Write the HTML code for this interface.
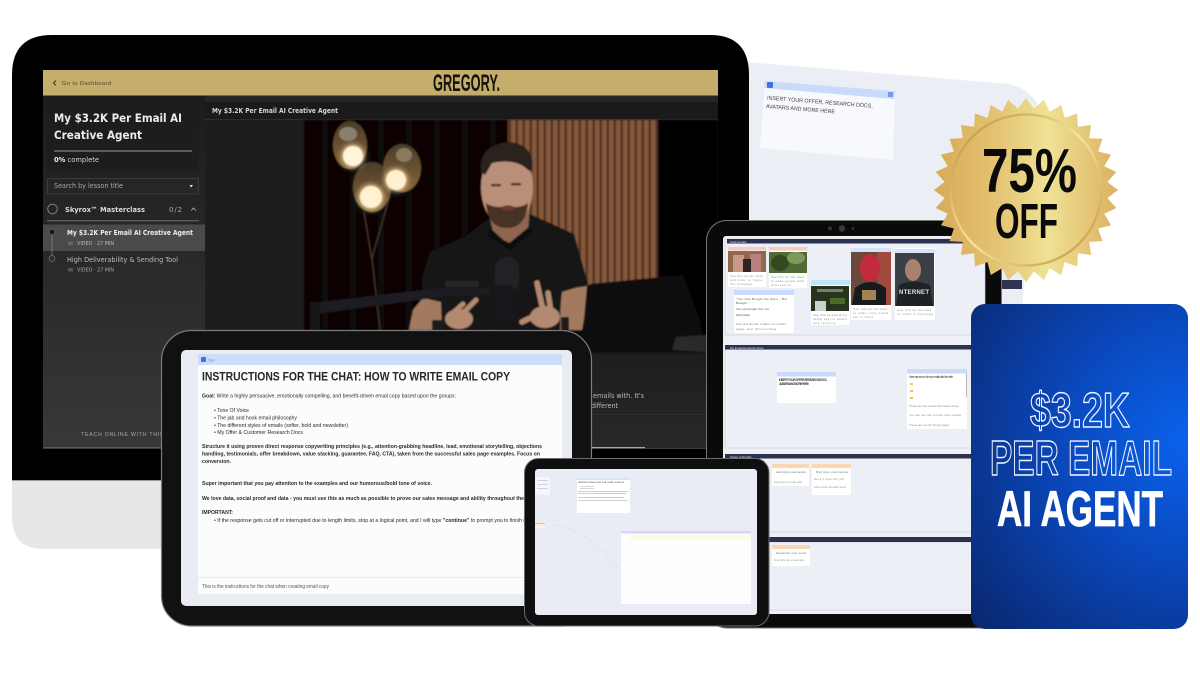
<!DOCTYPE html>
<html lang="en">
<head>
<meta charset="utf-8">
<title>$3.2K Per Email AI Agent</title>
<style>
html,body{margin:0;padding:0;background:#fff;width:1200px;height:675px;overflow:hidden}
svg{display:block}
text{font-family:"Liberation Sans",Arial,sans-serif}
.d{font-family:"DejaVu Sans","Liberation Sans",sans-serif}
.b{font-weight:700}
</style>
</head>
<body>
<svg xmlns="http://www.w3.org/2000/svg" width="1200" height="675" viewBox="0 0 1200 675">
<defs>
<linearGradient id="side" x1="0" y1="0" x2="0" y2="1"><stop offset="0" stop-color="#1c1c1c"/><stop offset="1" stop-color="#383838"/></linearGradient>
<linearGradient id="under" x1="0" y1="0" x2="0" y2="1"><stop offset="0" stop-color="#1d1d1d"/><stop offset="1" stop-color="#282828"/></linearGradient>
<linearGradient id="gold" gradientUnits="userSpaceOnUse" x1="934" y1="190" x2="1118" y2="190"><stop offset="0" stop-color="#d8a955"/><stop offset=".35" stop-color="#e4c474"/><stop offset=".62" stop-color="#efe295"/><stop offset="1" stop-color="#dcb060"/></linearGradient>
<linearGradient id="ring" x1="0" y1="0" x2="1" y2="1"><stop offset="0" stop-color="#b98a35"/><stop offset=".5" stop-color="#f4e59c"/><stop offset="1" stop-color="#c0913c"/></linearGradient>
<linearGradient id="glass" x1="0" y1="0" x2="0" y2="1"><stop offset="0" stop-color="#4a3c2a"/><stop offset=".6" stop-color="#6f5432"/><stop offset="1" stop-color="#8a6a3a"/></linearGradient>
<radialGradient id="blue" gradientUnits="userSpaceOnUse" cx="1188" cy="440" r="270"><stop offset="0" stop-color="#0b62ec"/><stop offset=".5" stop-color="#0a46b8"/><stop offset="1" stop-color="#0a2a74"/></radialGradient>
<pattern id="wood" patternUnits="userSpaceOnUse" width="7" height="10"><rect width="7" height="10" fill="#85593a"/><rect x="4.5" width="2.5" height="10" fill="#503220"/></pattern>
<pattern id="curtain" patternUnits="userSpaceOnUse" width="28" height="10"><rect width="28" height="10" fill="#070606"/><rect x="14" width="6" height="10" fill="#0f0e0d"/></pattern>
<filter id="soft" x="-5%" y="-5%" width="110%" height="110%"><feGaussianBlur stdDeviation="0.9"/></filter>
<filter id="glow" x="-60%" y="-60%" width="220%" height="220%"><feGaussianBlur stdDeviation="3"/></filter>
<filter id="tiny" x="-2%" y="-2%" width="104%" height="104%"><feGaussianBlur stdDeviation="0.3"/></filter>
<polygon id="t" points="0,-92 8.3,-81 -8.3,-81"/>
<clipPath id="starclip">
<circle cx="1026" cy="190" r="81.5"/>
<use href="#t" transform="translate(1026 190) rotate(0)"/><use href="#t" transform="translate(1026 190) rotate(11.25)"/><use href="#t" transform="translate(1026 190) rotate(22.5)"/><use href="#t" transform="translate(1026 190) rotate(33.75)"/><use href="#t" transform="translate(1026 190) rotate(45)"/><use href="#t" transform="translate(1026 190) rotate(56.25)"/><use href="#t" transform="translate(1026 190) rotate(67.5)"/><use href="#t" transform="translate(1026 190) rotate(78.75)"/><use href="#t" transform="translate(1026 190) rotate(90)"/><use href="#t" transform="translate(1026 190) rotate(101.25)"/><use href="#t" transform="translate(1026 190) rotate(112.5)"/><use href="#t" transform="translate(1026 190) rotate(123.75)"/><use href="#t" transform="translate(1026 190) rotate(135)"/><use href="#t" transform="translate(1026 190) rotate(146.25)"/><use href="#t" transform="translate(1026 190) rotate(157.5)"/><use href="#t" transform="translate(1026 190) rotate(168.75)"/><use href="#t" transform="translate(1026 190) rotate(180)"/><use href="#t" transform="translate(1026 190) rotate(191.25)"/><use href="#t" transform="translate(1026 190) rotate(202.5)"/><use href="#t" transform="translate(1026 190) rotate(213.75)"/><use href="#t" transform="translate(1026 190) rotate(225)"/><use href="#t" transform="translate(1026 190) rotate(236.25)"/><use href="#t" transform="translate(1026 190) rotate(247.5)"/><use href="#t" transform="translate(1026 190) rotate(258.75)"/><use href="#t" transform="translate(1026 190) rotate(270)"/><use href="#t" transform="translate(1026 190) rotate(281.25)"/><use href="#t" transform="translate(1026 190) rotate(292.5)"/><use href="#t" transform="translate(1026 190) rotate(303.75)"/><use href="#t" transform="translate(1026 190) rotate(315)"/><use href="#t" transform="translate(1026 190) rotate(326.25)"/><use href="#t" transform="translate(1026 190) rotate(337.5)"/><use href="#t" transform="translate(1026 190) rotate(348.75)"/>
</clipPath>
</defs>

<!-- light canvas panel behind -->
<path d="M745 62 L1008 84 Q1026 87 1037 103 L1022 310 L745 310 Z" fill="#ebeef5"/>
<rect x="1000" y="280" width="22" height="9" fill="#2f3452"/>
<g filter="url(#tiny)">
<polygon points="765,81 895,91 893,160 760,148" fill="#f8f9fd"/>
<polygon points="765,81 895,91 894,99 764,88" fill="#c9dafb"/>
<rect x="767" y="82" width="6" height="6" rx="1" fill="#3b76e0"/>
<rect x="888" y="92" width="5" height="5" fill="#6f9cea"/>
<text x="767" y="99.5" font-size="5.6" fill="#444" textLength="106" lengthAdjust="spacingAndGlyphs" transform="rotate(4.5 767 99.5)">INSERT YOUR OFFER, RESEARCH DOCS,</text>
<text x="766" y="108" font-size="5.6" fill="#444" textLength="69" lengthAdjust="spacingAndGlyphs" transform="rotate(4.5 766 108)">AVATARS AND MORE HERE</text>
</g>

<!-- laptop body -->
<path d="M12 480 V75 Q12 35 52 35 H710 Q749 35 749 75 V480 Z" fill="#000"/>
<path d="M12 480 H720 V549 H44 Q12 549 12 517 Z" fill="#e7e7e7"/>
<rect x="12" y="480" width="720" height="1" fill="#999"/>

<!-- laptop screen -->
<rect x="43" y="95" width="675" height="353" fill="#222"/>
<rect x="43" y="447.5" width="675" height="1" fill="#777"/>
<rect x="43" y="70" width="675" height="25.5" fill="#c5ae6c"/>
<path d="M56 80.5 L53.5 83 L56 85.5" fill="none" stroke="#3a3320" stroke-width="1"/>
<text x="62" y="85" font-size="5.6" fill="#4a4128" textLength="49">Go to Dashboard</text>
<text x="433" y="91" class="b" font-size="24" fill="#15130c" textLength="67" lengthAdjust="spacingAndGlyphs">GREGORY.</text>

<!-- sidebar -->
<rect x="43" y="95.5" width="162" height="352" fill="url(#side)"/>
<rect x="47" y="102" width="152" height="69" rx="2" fill="#1d1d1d"/>
<text x="54" y="122" class="d b" font-size="11.8" fill="#ececec" textLength="128" lengthAdjust="spacingAndGlyphs">My $3.2K Per Email AI</text>
<text x="54" y="139" class="d b" font-size="11.8" fill="#ececec" textLength="88" lengthAdjust="spacingAndGlyphs">Creative Agent</text>
<rect x="54" y="150" width="138" height="2" fill="#5c5c5c"/>
<text x="54" y="162" class="d" font-size="7" fill="#d5d5d5" textLength="45" lengthAdjust="spacingAndGlyphs"><tspan font-weight="700" fill="#eee">0%</tspan> complete</text>
<rect x="47.5" y="178.5" width="151" height="15.5" rx="1" fill="#262626" stroke="#3c3c3c"/>
<text x="54" y="188" class="d" font-size="6.6" fill="#a8a8a8" textLength="69" lengthAdjust="spacingAndGlyphs">Search by lesson title</text>
<polygon points="189.5,185 193,185 191.2,187.5" fill="#ddd"/>
<circle cx="52.5" cy="209" r="4.8" fill="none" stroke="#8a8a8a" stroke-width=".9"/>
<text x="65" y="212" class="d b" font-size="7.2" fill="#dcdcdc" textLength="80" lengthAdjust="spacingAndGlyphs">Skyrox™ Masterclass</text>
<text x="169" y="212" class="d" font-size="7" fill="#aaa" textLength="13">0/2</text>
<path d="M191.2 210.5 L193.5 208 L195.8 210.5" fill="none" stroke="#bbb" stroke-width=".8"/>
<rect x="47" y="220" width="152" height="1.4" fill="#5a5a5a"/>
<rect x="43" y="224.5" width="162" height="26.5" fill="#4a4a4a"/>
<line x1="52" y1="232" x2="52" y2="255" stroke="#8a8a8a" stroke-width=".7"/>
<circle cx="52" cy="232" r="3" fill="#1b1b1b" stroke="#777" stroke-width=".6"/>
<circle cx="52" cy="258.5" r="3" fill="#2d2d2d" stroke="#777" stroke-width=".7"/>
<text x="67" y="235" class="d b" font-size="6.8" fill="#eee" textLength="126" lengthAdjust="spacingAndGlyphs">My $3.2K Per Email AI Creative Agent</text>
<rect x="68" y="241.5" width="5" height="3.5" fill="#666"/>
<text x="77" y="245" class="d" font-size="4.8" fill="#bbb" textLength="37" lengthAdjust="spacingAndGlyphs">VIDEO · 27 MIN</text>
<text x="67" y="262" class="d" font-size="6.8" fill="#bdbdbd" textLength="111" lengthAdjust="spacingAndGlyphs">High Deliverability &amp; Sending Tool</text>
<rect x="68" y="268" width="5" height="3.5" fill="#555"/>
<text x="77" y="271.5" class="d" font-size="4.8" fill="#aaa" textLength="37" lengthAdjust="spacingAndGlyphs">VIDEO · 27 MIN</text>
<text x="81" y="436" font-size="5.2" fill="#aaa" textLength="100" lengthAdjust="spacing">TEACH ONLINE WITH THINKIFIC</text>

<!-- video header -->
<rect x="205" y="95.5" width="513" height="7" fill="#262626"/>
<rect x="205" y="102" width="513" height="17" fill="#1a1a1a"/>
<rect x="205" y="119" width="513" height=".8" fill="#333"/>
<text x="212" y="113" class="d b" font-size="6.8" fill="#d6d6d6" textLength="126" lengthAdjust="spacingAndGlyphs">My $3.2K Per Email AI Creative Agent</text>
<rect x="205" y="120" width="99" height="233" fill="#1d1d1d"/>
<rect x="205" y="353" width="513" height="95" fill="url(#under)"/>
<text x="593" y="398" class="d" font-size="7.4" fill="#b9b9b9" textLength="51" lengthAdjust="spacingAndGlyphs">emails with. It's</text>
<text x="591" y="408" class="d" font-size="7.4" fill="#b9b9b9" textLength="27" lengthAdjust="spacingAndGlyphs">different</text>
<rect x="592" y="414" width="126" height=".8" fill="#333"/>
<rect x="592" y="447" width="53" height="1.4" fill="#aaa"/>

<!-- video picture -->
<g filter="url(#soft)">
<rect x="304" y="120" width="414" height="233" fill="url(#curtain)"/>
<rect x="508" y="120" width="150" height="165" fill="url(#wood)"/>
<rect x="658" y="120" width="60" height="233" fill="#060606"/>
<!-- lamp stem -->
<path d="M364 212 L372 260 M390 195 L372 258 L380 330" stroke="#4a3f33" stroke-width="1" fill="none"/>
<!-- lamps -->
<ellipse cx="350" cy="145" rx="17" ry="24" fill="url(#glass)"/>
<ellipse cx="372" cy="187" rx="19" ry="25" fill="url(#glass)"/>
<ellipse cx="402" cy="168" rx="19" ry="24" fill="url(#glass)"/>
<ellipse cx="348" cy="134" rx="9" ry="7" fill="#8a8070"/>
<ellipse cx="404" cy="155" rx="8" ry="7" fill="#8a7a60"/>
<circle cx="353" cy="156" r="11" fill="#ffdca0" filter="url(#glow)"/>
<circle cx="371" cy="197" r="12" fill="#ffe2a8" filter="url(#glow)"/>
<circle cx="396" cy="180" r="11" fill="#ffdca0" filter="url(#glow)"/>
<circle cx="353" cy="156" r="10" fill="#fff5dc"/>
<circle cx="371" cy="197" r="11" fill="#fff2d2"/>
<circle cx="396" cy="180" r="10" fill="#fff0cf"/>
<!-- man: arms -->
<path d="M409 330 L413 310 L423 298 L441 302 L446 330 Z" fill="#a27a60"/>
<path d="M561 290 L587 286 L583 330 L560 330 Z" fill="#a27a60"/>
<!-- torso -->
<path d="M466 236 L490 218 L530 214 L574 234 L588 284 L562 292 L558 330 L442 330 L441 302 L423 296 L422 278 L430 252 Z" fill="#121212"/>
<!-- neck -->
<path d="M488 210 L530 205 L528 232 L510 243 L494 236 Z" fill="#8e6650"/>
<path d="M490 228 L508 244 L530 226 L532 232 L510 250 L488 236 Z" fill="#0a0a0a"/>
<!-- head -->
<ellipse cx="507" cy="187" rx="26" ry="40" fill="#b98f7a"/>
<path d="M486 203 Q488 228 507 228 Q526 228 528 203 Q520 209 507 206 Q494 209 486 203 Z" fill="#463228"/>
<path d="M481 172 Q478 146 508 142 Q536 144 532 172 L528 170 Q516 158 492 163 L485 175 Z" fill="#2c211b"/>
<rect x="491" y="184" width="10" height="2.4" fill="#4a3529"/>
<rect x="511" y="183" width="10" height="2.4" fill="#4a3529"/>
<ellipse cx="508" cy="208" rx="6.5" ry="2.8" fill="#6b3a30"/>
<!-- mic -->
<path d="M312 303 L440 288 L490 288 L490 295 L440 297 L316 314 Z" fill="#1f1f22"/>
<rect x="310" y="302" width="10" height="28" fill="#131315"/>
<rect x="445" y="281" width="34" height="6" rx="2" fill="#26262a"/>
<rect x="495" y="257" width="24" height="36" rx="11" fill="#222225"/>
<rect x="493" y="285" width="22" height="36" rx="7" fill="#19191b"/>
<!-- hands -->
<ellipse cx="459" cy="319" rx="14" ry="10" fill="#b38a70"/>
<path d="M462 314 L476 300 M453 313 L463 304" stroke="#b38a70" stroke-width="5" stroke-linecap="round" fill="none"/>
<ellipse cx="545" cy="317" rx="15" ry="11" fill="#b38a70"/>
<path d="M543 310 L537 283 M551 312 L548 293 M530 318 L522 322" stroke="#b38a70" stroke-width="5.5" stroke-linecap="round" fill="none"/>
<rect x="432" y="320" width="13" height="10" fill="#1a1a1a"/>
<rect x="561" y="317" width="8" height="13" fill="#1a1a1a"/>
<!-- laptop on table -->
<path d="M590 284 L683 275 L700 320 L706 353 L578 353 Z" fill="#0c0c0d"/>
<path d="M672 350 L676 337 L706 335 L706 352 Z" fill="#2a2a2a"/>
</g>

<!-- right tablet -->
<rect x="706.5" y="220.5" width="295" height="407.5" rx="20" fill="#0a0a0a" stroke="#777"/>
<circle cx="830" cy="228.5" r="2" fill="#333"/><circle cx="842" cy="228.5" r="3.2" fill="#3a3a3a"/><circle cx="853" cy="228.5" r="1.2" fill="#444"/>
<rect x="723" y="236" width="262" height="378" rx="3" fill="#eef0f6"/>
<g filter="url(#tiny)">
<rect x="725" y="239" width="260" height="96" fill="#eceff5" stroke="#c9ccd3" stroke-width=".6"/>
<rect x="727" y="239" width="258" height="4.5" fill="#2b3050"/>
<text x="730" y="243" font-size="3" fill="#dfe2ee">Testimonials</text>

<rect x="728" y="247" width="38" height="40" fill="#fff"/><rect x="728" y="247" width="38" height="3.6" fill="#f9c9c4"/>
<rect x="728" y="251" width="38" height="21" fill="#8e6750"/><rect x="733" y="255" width="11" height="17" fill="#c89a86"/><rect x="750" y="254" width="11" height="18" fill="#b5817a"/><rect x="743" y="259" width="8" height="13" fill="#2d2224"/>
<text x="730" y="277" font-size="2.8" fill="#888" textLength="33">Use this as the hook</text>
<text x="730" y="281" font-size="2.8" fill="#888" textLength="32">and story to frame</text>
<text x="730" y="285" font-size="2.8" fill="#888" textLength="22">the message</text>

<rect x="769" y="247" width="38" height="41" fill="#fff"/><rect x="769" y="247" width="38" height="3.6" fill="#f9c9c4"/>
<rect x="769" y="252" width="38" height="21" fill="#4f6a35"/><ellipse cx="780" cy="263" rx="9" ry="8" fill="#314a22"/><ellipse cx="796" cy="258" rx="9" ry="6" fill="#7f9a58"/>
<text x="771" y="278" font-size="2.8" fill="#888" textLength="33">Use this for the hook</text>
<text x="771" y="282" font-size="2.8" fill="#888" textLength="33">to make people click</text>
<text x="771" y="286" font-size="2.8" fill="#888" textLength="20">and read on</text>

<rect x="811" y="280" width="39" height="45" fill="#fff"/><rect x="811" y="280" width="39" height="5" fill="#bfe6f3"/>
<rect x="811" y="286" width="38" height="25" fill="#27351f"/><rect x="815" y="301" width="11" height="10" fill="#c9d2c8"/><rect x="830" y="298" width="15" height="6" fill="#4d6a2c"/><rect x="817" y="289" width="26" height="3" fill="#768070"/>
<text x="813" y="316" font-size="2.8" fill="#888" textLength="34">Use this as a hook for</text>
<text x="813" y="320" font-size="2.8" fill="#888" textLength="34">better copy in emails</text>
<text x="813" y="324" font-size="2.8" fill="#888" textLength="22">and landing</text>

<rect x="851" y="248" width="40" height="72" fill="#fff"/><rect x="851" y="248" width="40" height="4.5" fill="#d5e2fb"/>
<rect x="851" y="252" width="40" height="53" fill="#6b4a3a"/><rect x="877" y="252" width="14" height="53" fill="#a14a3c"/>
<ellipse cx="870" cy="268" rx="10" ry="14" fill="#c22b3d"/><path d="M852 305 L855 288 Q870 276 886 288 L886 305 Z" fill="#161a1c"/><rect x="862" y="290" width="14" height="10" fill="#a5824f"/>
<text x="853" y="310" font-size="2.8" fill="#888" textLength="34">Use this as the idea</text>
<text x="853" y="314" font-size="2.8" fill="#888" textLength="35">to make copy stand</text>
<text x="853" y="318" font-size="2.8" fill="#888" textLength="20">out in inbox</text>

<rect x="895" y="248" width="40" height="72" fill="#fff"/><rect x="895" y="249" width="40" height="4" fill="#d5e2fb"/>
<rect x="895" y="253" width="39" height="53" fill="#3b3f46"/><ellipse cx="913" cy="270" rx="8" ry="11" fill="#a8826d"/><path d="M896 306 L899 285 Q913 278 930 285 L933 306 Z" fill="#1a2027"/>
<text x="899" y="294" class="b" font-size="6" fill="#dfe3e6" textLength="30">NTERNET</text>
<text x="897" y="311" font-size="2.8" fill="#888" textLength="34">Use this as the idea</text>
<text x="897" y="315" font-size="2.8" fill="#888" textLength="36">to make a message</text>

<rect x="734" y="290" width="60" height="43" fill="#fff"/><rect x="734" y="290" width="60" height="5" fill="#c9dafb"/>
<text x="736" y="300" font-size="3" fill="#555" textLength="51">"You Just Bought the Store - But</text>
<text x="736" y="304" font-size="3" fill="#555" textLength="14">Brought..."</text>
<text x="736" y="310" font-size="3" fill="#555" textLength="33">You just bought from me</text>
<text x="736" y="316" font-size="3" fill="#555" textLength="14">Wired back</text>
<text x="736" y="325" font-size="3" fill="#777" textLength="50">Use this as the outline of a sales</text>
<text x="736" y="330" font-size="3" fill="#777" textLength="40">page, test this morning</text>

<rect x="725" y="349" width="260" height="99" fill="#eceff5" stroke="#c9ccd3" stroke-width=".6"/>
<rect x="725" y="345" width="260" height="4.5" fill="#2b3050"/>
<text x="730" y="349" font-size="3" fill="#dfe2ee">My Email Research Docs</text>
<rect x="777" y="372" width="59" height="31" fill="#fff"/><rect x="777" y="372" width="59" height="4.5" fill="#c9dafb"/>
<text x="779" y="381" class="b" font-size="3.2" fill="#444" textLength="48">INSERT YOUR OFFER, RESEARCH DOCS,</text>
<text x="779" y="385" class="b" font-size="3.2" fill="#444" textLength="30">AVATARS AND MORE HERE</text>
<rect x="907" y="369" width="60" height="60" fill="#fff"/><rect x="907" y="369" width="60" height="4.5" fill="#c9dafb"/>
<text x="909" y="378" font-size="3.2" fill="#444" textLength="44">Here are some of my emails with the offer</text>
<rect x="910" y="383" width="3" height="2" fill="#e6c95a"/><rect x="910" y="390" width="3" height="2" fill="#e6c95a"/><rect x="910" y="397" width="3" height="2" fill="#e6c95a"/>
<rect x="966" y="373" width="1" height="24" fill="#bbb"/>
<text x="909" y="407" font-size="2.8" fill="#888" textLength="50">These are the emails that made money</text>
<text x="909" y="416" font-size="2.8" fill="#888" textLength="52">You can use this to write more emails</text>
<text x="909" y="426" font-size="2.8" fill="#888" textLength="40">These are worth doing again</text>

<rect x="725" y="458" width="260" height="74" fill="#eceff5" stroke="#c9ccd3" stroke-width=".6"/>
<rect x="725" y="454" width="260" height="4.5" fill="#2b3050"/>
<text x="730" y="458" font-size="3" fill="#dfe2ee">Styles of Emails</text>
<rect x="772" y="464" width="37" height="22" fill="#fff"/><rect x="772" y="464" width="37" height="4" fill="#fbd6b4"/>
<text x="776" y="473" font-size="2.8" fill="#777" textLength="30">Hard style email sample</text>
<text x="774" y="483" font-size="2.8" fill="#888" textLength="28">Use this to write soft</text>
<rect x="812" y="464" width="39" height="31" fill="#fff"/><rect x="812" y="464" width="39" height="4" fill="#fbd6b4"/>
<text x="816" y="473" font-size="2.8" fill="#777" textLength="32">Bold style email sample</text>
<text x="814" y="480" font-size="2.8" fill="#888" textLength="30">Here's how the jab</text>
<text x="814" y="488" font-size="2.8" fill="#888" textLength="32">and hook should work</text>

<rect x="725" y="542" width="260" height="68" fill="#eceff5" stroke="#c9ccd3" stroke-width=".6"/>
<rect x="725" y="537" width="260" height="5" fill="#2b3050"/>
<rect x="772" y="545" width="38" height="21" fill="#fff"/><rect x="772" y="545" width="38" height="4" fill="#fbd6b4"/>
<text x="776" y="554" font-size="2.8" fill="#777" textLength="30">Newsletter style email</text>
<text x="774" y="561" font-size="2.8" fill="#888" textLength="30">Use this as a sample</text>
</g>

<!-- left tablet -->
<rect x="161.5" y="330.5" width="430" height="295.5" rx="30" fill="#111" stroke="#7c7c7c" stroke-width="1.2"/>
<rect x="181" y="350" width="391" height="256" rx="5" fill="#e9ecf3"/>
<rect x="198" y="354" width="364" height="240" fill="#fbfcfe"/>
<rect x="198" y="354" width="364" height="11" fill="#ccdcfb"/>
<rect x="201" y="357" width="5" height="5" rx="1" fill="#3b76e0"/>
<text x="208" y="361.5" font-size="3.6" fill="#6d84b5">Text</text>
<g fill="#2a2a2a">
<text x="202" y="380.5" class="b" font-size="11.8" fill="#262626" textLength="308" lengthAdjust="spacingAndGlyphs">INSTRUCTIONS FOR THE CHAT: HOW TO WRITE EMAIL COPY</text>
<text x="202" y="397.5" font-size="5.7" textLength="254" lengthAdjust="spacingAndGlyphs"><tspan font-weight="700">Goal:</tspan> Write a highly persuasive, emotionally compelling, and benefit-driven email copy based upon the groups:</text>
<text x="214" y="412" font-size="5.7" textLength="35" lengthAdjust="spacingAndGlyphs">• Tone Of Voice</text>
<text x="214" y="419.5" font-size="5.7" textLength="83" lengthAdjust="spacingAndGlyphs">• The jab and hook email philosophy</text>
<text x="214" y="427" font-size="5.7" textLength="134" lengthAdjust="spacingAndGlyphs">• The different styles of emails (softer, bold and newsletter)</text>
<text x="214" y="434.2" font-size="5.7" textLength="89" lengthAdjust="spacingAndGlyphs">• My Offer &amp; Customer Research Docs</text>
<g class="b" font-weight="700" font-size="5.7">
<text x="202" y="447.8" textLength="340" lengthAdjust="spacingAndGlyphs">Structure it using proven direct response copywriting principles (e.g., attention-grabbing headline, lead, emotional storytelling, objections</text>
<text x="202" y="455.5" textLength="338" lengthAdjust="spacingAndGlyphs">handling, testimonials, offer breakdown, value stacking, guarantee, FAQ, CTA), taken from the successful sales page examples. Focus on</text>
<text x="202" y="463" textLength="29" lengthAdjust="spacingAndGlyphs">conversion.</text>
<text x="202" y="485" textLength="230" lengthAdjust="spacingAndGlyphs">Super important that you pay attention to the examples and our humorous/bold tone of voice.</text>
<text x="202" y="500" textLength="322" lengthAdjust="spacingAndGlyphs">We love data, social proof and data - you must use this as much as possible to prove our sales message and ability throughout the</text>
<text x="202" y="514" textLength="31" lengthAdjust="spacingAndGlyphs">IMPORTANT:</text>
</g>
<text x="214" y="522" font-size="5.7" textLength="312" lengthAdjust="spacingAndGlyphs">• If the response gets cut off or interrupted due to length limits, stop at a logical point, and I will type <tspan font-weight="700">"continue"</tspan> to prompt you to finish it</text>
</g>
<rect x="198" y="577" width="364" height="1" fill="#e8eaf0"/>
<text x="202" y="588" font-size="5.4" fill="#555" textLength="127" lengthAdjust="spacingAndGlyphs">This is the instructions for the chat when creating email copy</text>

<!-- small tablet -->
<rect x="524.5" y="458.5" width="244.5" height="167.5" rx="14" fill="#0f0f0f" stroke="#6c6c6c"/>
<rect x="535" y="469" width="222" height="146" rx="3" fill="#e9ecf4"/>
<g filter="url(#tiny)">
<path d="M552 525 Q575 528 590 540 T620 570" fill="none" stroke="#d6d9e2" stroke-width=".6" stroke-dasharray="4 3"/>
<rect x="535" y="477" width="15" height="18" fill="#f5f6fa"/>
<rect x="537" y="480" width="11" height=".8" fill="#c5c8d4"/><rect x="537" y="484" width="11" height=".8" fill="#c5c8d4"/><rect x="537" y="488" width="11" height=".8" fill="#c5c8d4"/>
<rect x="535" y="523" width="10" height="5" fill="#fbf1e8"/><rect x="535" y="523" width="10" height="1.2" fill="#f2bd93"/>
<rect x="577" y="478" width="53" height="35" fill="#fff"/><rect x="577" y="478" width="53" height="2" fill="#d8e2f8"/>
<text x="578" y="483" class="b" font-size="2.2" fill="#666" textLength="46">INSTRUCTIONS FOR THE CHAT: HOW TO</text>
<rect x="580" y="486" width="14" height=".7" fill="#c5c5c5"/><rect x="580" y="488" width="14" height=".7" fill="#c5c5c5"/><rect x="578" y="491" width="50" height=".7" fill="#bbb"/><rect x="578" y="493" width="48" height=".7" fill="#bbb"/><rect x="578" y="497" width="46" height=".7" fill="#bbb"/><rect x="578" y="500" width="50" height=".7" fill="#bbb"/>
<rect x="621" y="531" width="130" height="73" fill="#fdfdff"/><rect x="621" y="531" width="130" height="2.5" fill="#d5d8f5"/>
<rect x="630" y="535" width="121" height="5" fill="#fafbe4"/>
</g>

<!-- blue card -->
<rect x="971" y="304" width="217" height="325" rx="14" fill="url(#blue)"/>
<g text-anchor="start" stroke-linejoin="round">
<text x="1030" y="427" class="b" font-size="49" fill="none" stroke="#eef3ff" stroke-width="1.4" textLength="100" lengthAdjust="spacingAndGlyphs">$3.2K</text>
<text x="990" y="475" class="b" font-size="49" fill="none" stroke="#eef3ff" stroke-width="1.4" textLength="182" lengthAdjust="spacingAndGlyphs">PER EMAIL</text>
<text x="997" y="526" class="b" font-size="50" fill="#fff" stroke="#fff" stroke-width=".7" textLength="166" lengthAdjust="spacingAndGlyphs">AI AGENT</text>
</g>

<!-- badge -->
<rect x="930" y="94" width="192" height="192" fill="url(#gold)" clip-path="url(#starclip)"/>
<circle cx="1026" cy="190" r="75.5" fill="url(#gold)" stroke="url(#ring)" stroke-width="2.4"/>
<text x="982" y="192" class="b" font-size="62" fill="#0a0a0a" textLength="95" lengthAdjust="spacingAndGlyphs">75%</text>
<text x="995" y="238" class="b" font-size="49" fill="#0a0a0a" textLength="63" lengthAdjust="spacingAndGlyphs">OFF</text>
</svg>
</body>
</html>
